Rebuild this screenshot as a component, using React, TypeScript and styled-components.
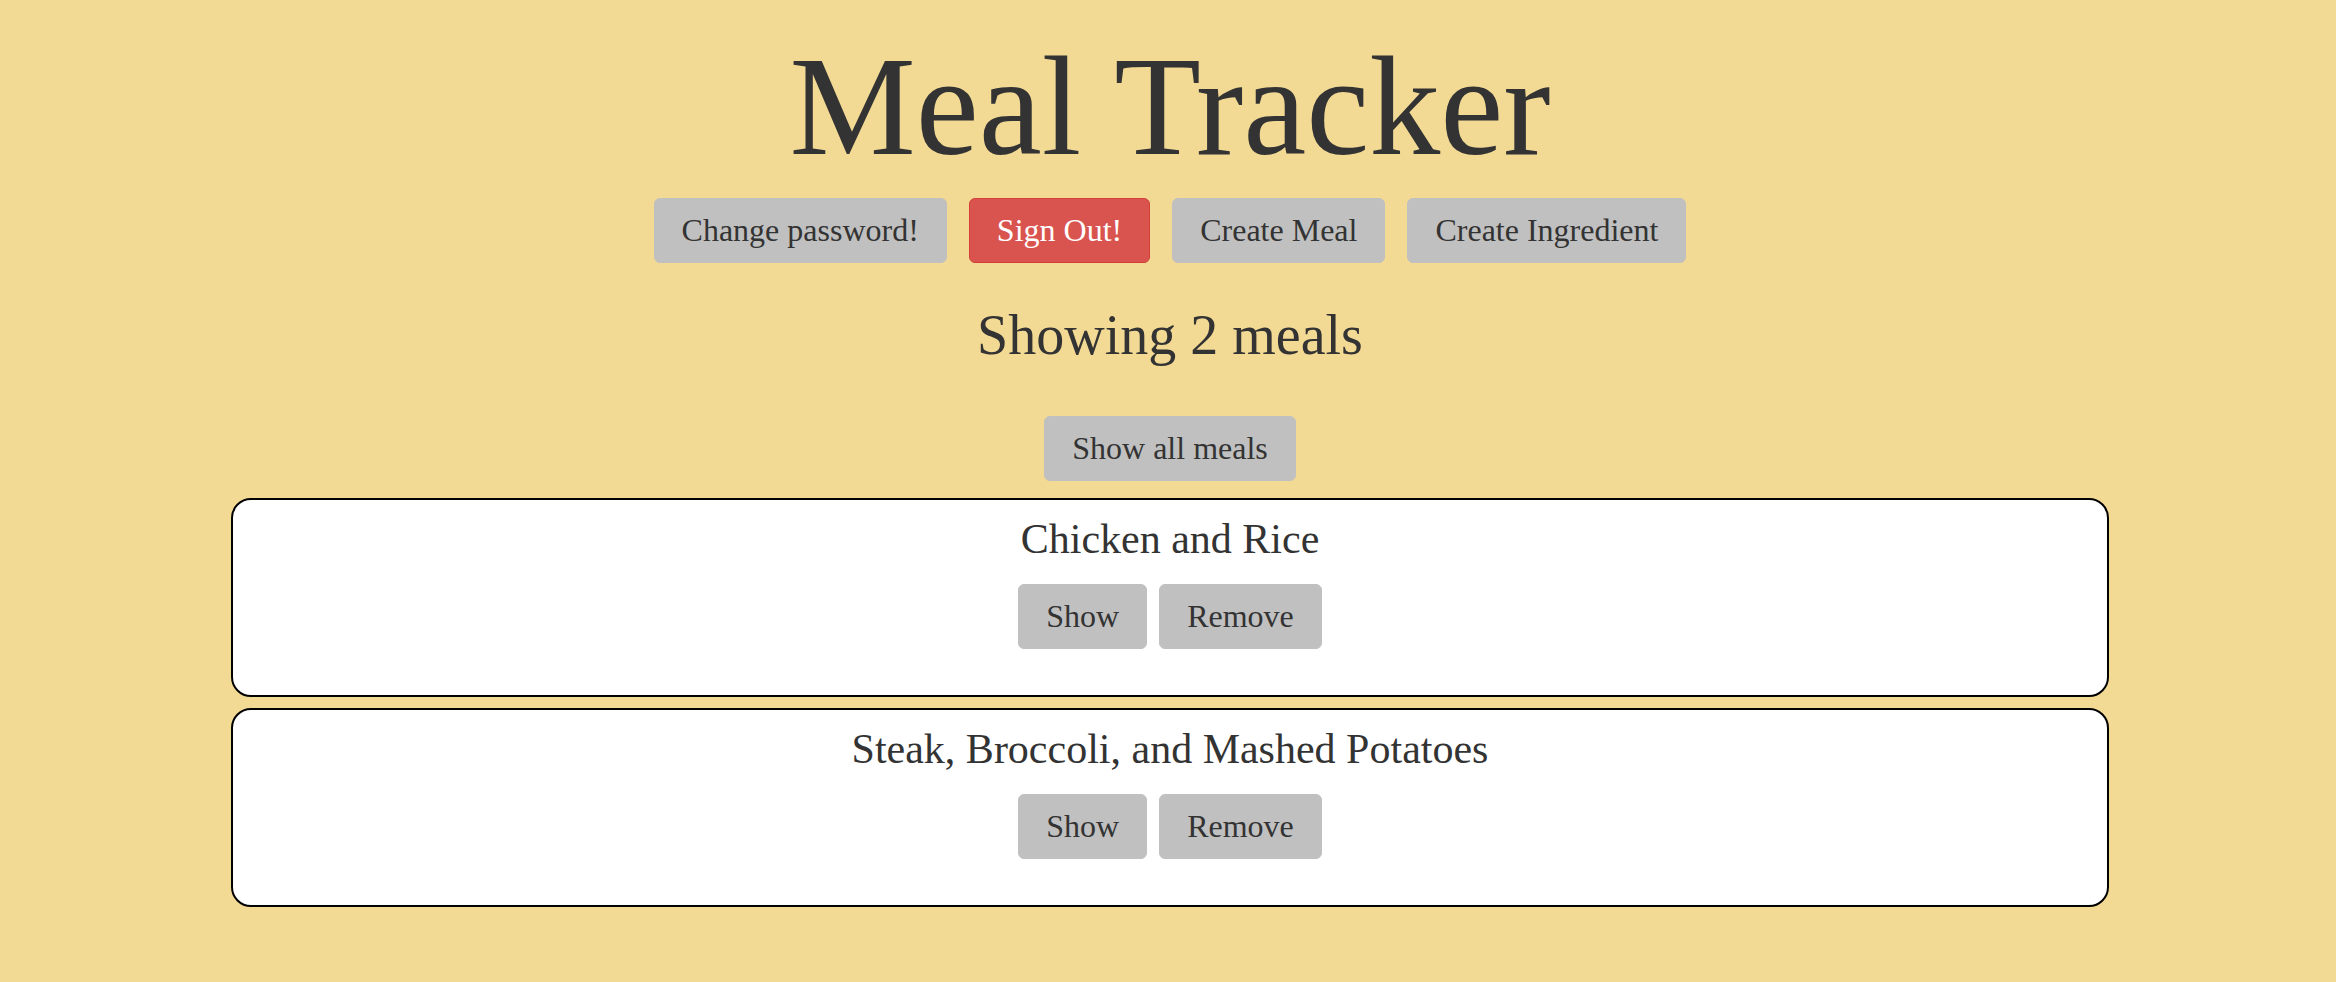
import React from "react";
import styled, { createGlobalStyle } from "styled-components";

const GlobalStyle = createGlobalStyle`
  html, body {
    margin: 0;
    padding: 0;
    background: #f2d994;
  }
  body {
    font-family: "Liberation Serif", "DejaVu Serif", serif;
    color: #333333;
  }
`;

const Page = styled.div`
  min-height: 982px;
  box-sizing: border-box;
  padding: 29px 0 40px 4px;
  display: flex;
  flex-direction: column;
  align-items: center;
`;

const Title = styled.h1`
  margin: 0;
  font-size: 142px;
  line-height: 154px;
  font-weight: 400;
  color: #333333;
`;

const NavBar = styled.nav`
  margin-top: 15px;
  display: flex;
  gap: 22px;
`;

const Button = styled.button<{ $variant?: "default" | "danger" }>`
  box-sizing: border-box;
  height: 65px;
  padding: 0 27px;
  font-family: "Liberation Serif", "DejaVu Serif", serif;
  font-size: 32px;
  line-height: 41px;
  border-radius: 6px;
  cursor: pointer;
  border: 1px solid ${(p) => (p.$variant === "danger" ? "#d43f3a" : "#c0c0c0")};
  background: ${(p) => (p.$variant === "danger" ? "#d9534f" : "#c0c0c0")};
  color: ${(p) => (p.$variant === "danger" ? "#ffffff" : "#333333")};
`;

const Heading = styled.h2`
  margin: 39px 0 0;
  font-size: 56px;
  line-height: 67px;
  font-weight: 400;
`;

const ShowAll = styled.div`
  margin-top: 47px;
`;

const MealList = styled.div`
  margin-top: 17px;
  width: 1878px;
  display: flex;
  flex-direction: column;
  gap: 11px;
`;

const MealCard = styled.div`
  box-sizing: border-box;
  height: 199px;
  background: #ffffff;
  border: 2px solid #000000;
  border-radius: 20px;
  padding-top: 14px;
  display: flex;
  flex-direction: column;
  align-items: center;
`;

const MealName = styled.h3`
  margin: 0;
  font-size: 42px;
  line-height: 50px;
  font-weight: 400;
`;

const MealActions = styled.div`
  margin-top: 20px;
  display: flex;
  gap: 12px;
`;

const meals = [
  { id: 1, name: "Chicken and Rice" },
  { id: 2, name: "Steak, Broccoli, and Mashed Potatoes" },
];

export default function App() {
  return (
    <>
      <GlobalStyle />
      <Page>
        <Title>Meal Tracker</Title>
        <NavBar>
          <Button>Change password!</Button>
          <Button $variant="danger">Sign Out!</Button>
          <Button>Create Meal</Button>
          <Button>Create Ingredient</Button>
        </NavBar>
        <Heading>Showing 2 meals</Heading>
        <ShowAll>
          <Button>Show all meals</Button>
        </ShowAll>
        <MealList>
          {meals.map((m) => (
            <MealCard key={m.id}>
              <MealName>{m.name}</MealName>
              <MealActions>
                <Button>Show</Button>
                <Button>Remove</Button>
              </MealActions>
            </MealCard>
          ))}
        </MealList>
      </Page>
    </>
  );
}
